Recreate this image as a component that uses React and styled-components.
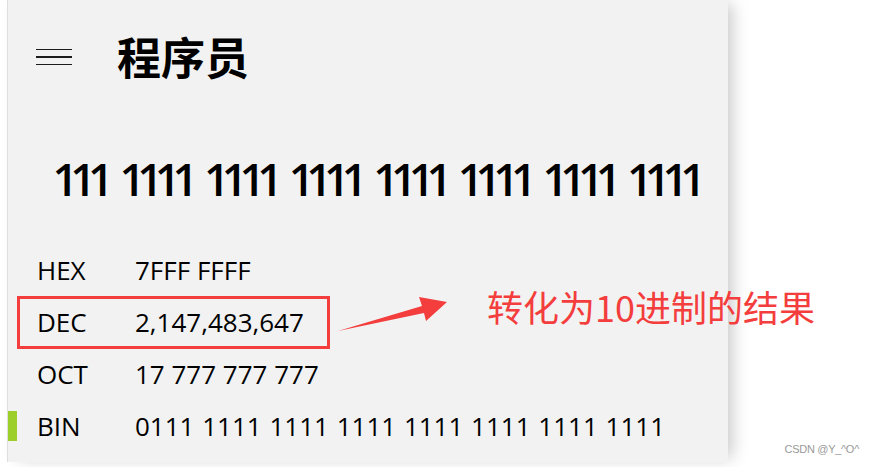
import React from 'react';
import styled, {createGlobalStyle} from 'styled-components';

const GlobalStyle = createGlobalStyle`
  html, body {
    margin: 0;
    padding: 0;
    background: #ffffff;
  }
  body {
    font-family: "Open Sans", "Noto Sans CJK SC", sans-serif;
  }
`

const red = '#f43d3d';

const Page = styled.div`
  position: relative;
  width: 872px;
  height: 467px;
  overflow: hidden;
  background: #ffffff;
`

const Window = styled.div`
  width: 720px;
  height: 462px;
  margin-left: 7px;
  border-left: 1px solid #dedede;
  background: #f2f2f2;
  box-shadow: 8px 0 16px -4px rgba(0, 0, 0, 0.22);
  display: flex;
  flex-direction: column;
`

const Header = styled.div`
  height: 112px;
  display: flex;
  align-items: center;
  padding-left: 28px;
`

const Menu = styled.div`
  width: 36px;
  display: flex;
  flex-direction: column;
  gap: 5.8px;
  margin-top: 2px;
`

const MenuLine = styled.span`
  display: block;
  height: 1.5px;
  background: #1c1c1c;
`

const Title = styled.h1`
  margin: 0 0 0 45px;
  font-family: "Noto Sans CJK SC", sans-serif;
  font-size: 44px;
  font-weight: 700;
  line-height: 1;
  color: #000;
`

const Display = styled.div`
  height: 132px;
  display: flex;
  align-items: center;
  justify-content: flex-end;
  padding-right: 30px;
`

const Result = styled.div`
  font-family: "Open Sans", sans-serif;
  font-size: 45px;
  font-weight: 600;
  line-height: 1;
  letter-spacing: -8px;
  word-spacing: 10px;
  color: #000;
`

const Radix = styled.div`
  display: flex;
  flex-direction: column;
`

const Row = styled.div`
  height: 52px;
  display: flex;
  align-items: center;
  font-family: "Open Sans", sans-serif;
  font-size: 26px;
  font-weight: 500;
  color: #000;
`

const Marker = styled.span`
  width: 9px;
  height: 30px;
  margin-right: 20px;
  background: ${p => (p.$active ? '#9dcf2b' : 'transparent')};
`

const Label = styled.span`
  width: 98px;
`

const Value = styled.span`
  white-space: pre;
  word-spacing: ${p => p.$wide ? '1px' : '0'};
`

const Highlight = styled.div`
  position: absolute;
  left: 17px;
  top: 296px;
  width: 307px;
  height: 47px;
  border: 3px solid ${red};
`

const Arrow = styled.svg`
  position: absolute;
  left: 330px;
  top: 290px;
`

const Note = styled.div`
  position: absolute;
  left: 487px;
  top: 288px;
  font-family: "Noto Sans CJK SC", sans-serif;
  font-size: 36px;
  line-height: 1;
  color: ${red};
  white-space: nowrap;
`

const Watermark = styled.div`
  position: absolute;
  right: 13px;
  top: 443px;
  font-family: "Liberation Sans", Arial, sans-serif;
  font-size: 11px;
  letter-spacing: -0.3px;
  color: #9a9a9a;
`

const rows = [
  {label: 'HEX', value: '7FFF FFFF'},
  {label: 'DEC', value: '2,147,483,647'},
  {label: 'OCT', value: '17 777 777 777'},
  {label: 'BIN', value: '0111 1111 1111 1111 1111 1111 1111 1111', active: true}
];

class App extends React.Component {
  render() {
    return (
      <Page>
        <GlobalStyle/>
        <Window>
          <Header>
            <Menu>
              <MenuLine/>
              <MenuLine/>
              <MenuLine/>
            </Menu>
            <Title>程序员</Title>
          </Header>
          <Display>
            <Result>111 1111 1111 1111 1111 1111 1111 1111</Result>
          </Display>
          <Radix>
            {rows.map(r => (
              <Row key={r.label}>
                <Marker $active={r.active}/>
                <Label>{r.label}</Label>
                <Value $wide={r.active}>{r.value}</Value>
              </Row>
            ))}
          </Radix>
        </Window>

        <Highlight/>
        <Arrow width="130" height="50" viewBox="330 290 130 50">
          <polygon
            points="338,331 422,306 419,297 447,302 426,321 424,313"
            fill={red}/>
        </Arrow>
        <Note>转化为10进制的结果</Note>
        <Watermark>CSDN @Y_^O^</Watermark>
      </Page>
    )
  }
}

export default App;
